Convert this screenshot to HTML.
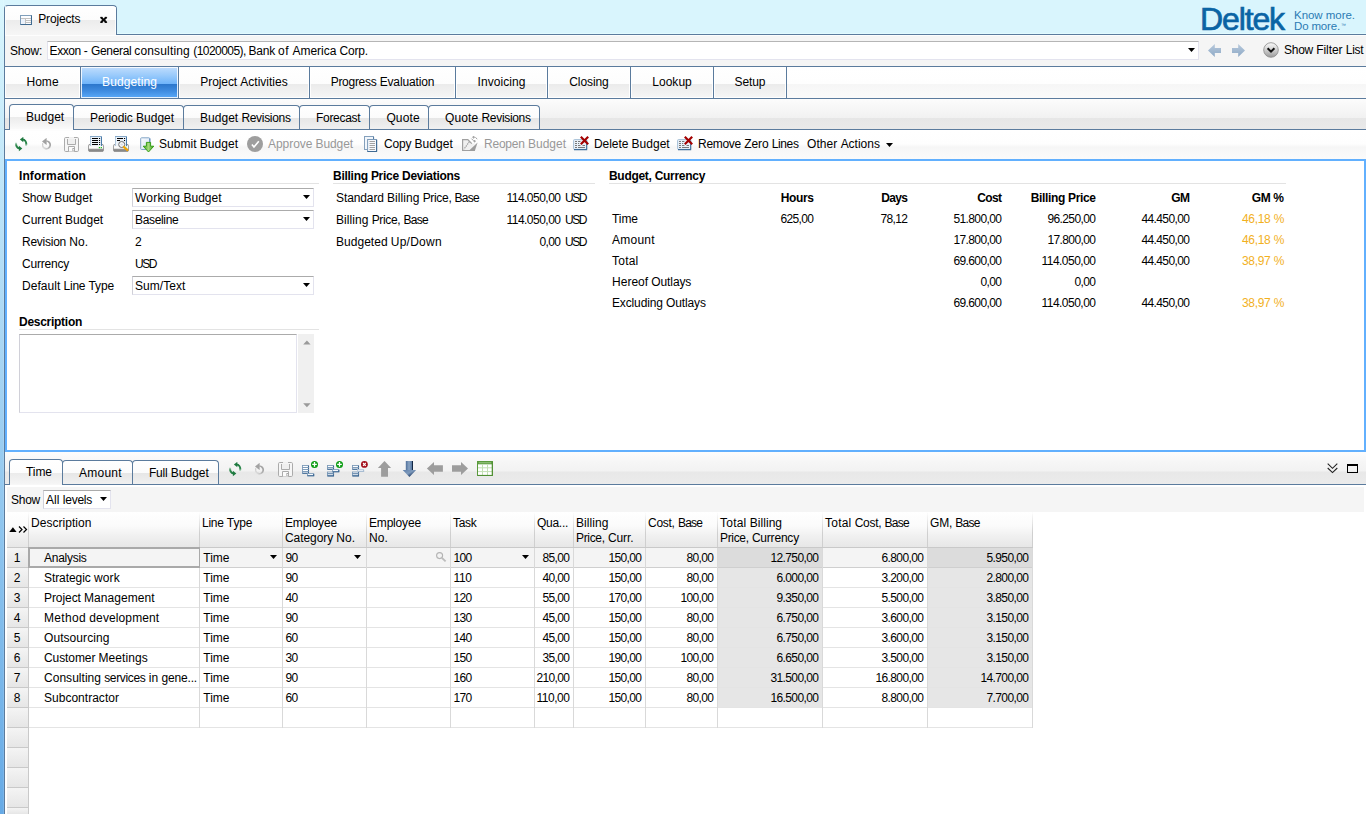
<!DOCTYPE html>
<html><head><meta charset="utf-8"><title>Projects</title>
<style>
html,body{margin:0;padding:0;background:#d9f5fd;}
#r{position:relative;width:1366px;height:814px;overflow:hidden;background:#d9f5fd;font-family:"Liberation Sans",sans-serif;font-size:12px;color:#000;}
#r>div,#r>svg,#r>span{position:absolute;display:block;}
.t{white-space:nowrap;line-height:14px;}
</style></head><body><div id="r">
<div style="left:0px;top:0px;width:4px;height:814px;background:linear-gradient(to bottom,#daf7fe 0px,#66aae6 814px)"></div>
<div style="left:3px;top:0px;width:1px;height:814px;background:rgba(255,255,255,.12)"></div>
<div style="left:4px;top:9px;width:1px;height:805px;background:#5b7b9d"></div>
<div style="left:116px;top:34px;width:1250px;height:1px;background:#5b7b9d"></div>
<div style="left:117px;top:33px;width:1249px;height:1px;background:#e2fbff"></div>
<div style="left:4px;top:5px;width:113px;height:30px;box-sizing:border-box;border:1px solid #5b7b9d;border-bottom:none;border-radius:4px 4px 0 0;background:linear-gradient(to bottom,#fff 0,#fcfcfc 14px,#ececec 14px,#f6f6f6 29px)"></div>
<div style="left:5px;top:6px;width:1px;height:29px;background:rgba(255,255,255,.8)"></div>
<div style="left:115px;top:7px;width:1px;height:27px;background:rgba(255,255,255,.8)"></div>
<svg style="left:20px;top:15px" width="12" height="10" viewBox="0 0 12 10"><rect x="0.5" y="0.5" width="11" height="9" fill="#fcfdff" stroke="#7f9eba"/><path d="M11.5 0.6V9.5H0.6" stroke="#3f6a90" stroke-width="1.1" fill="none"/><path d="M1 3.5H11M5.5 3.5V9M6 5.5H11M6 7.5H11" stroke="#c2c2c2"/><rect x="1.2" y="4.2" width="3.8" height="4.6" fill="#eaf1fb"/></svg>
<span class="t" style="top:12px;left:38.30px;letter-spacing:-0.176px;">Projects</span>
<svg style="left:100px;top:16px" width="8" height="8" viewBox="0 0 8 8"><path d="M1 1.5 L6.3 6.3 M6.3 1.5 L1 6.3" stroke="#080808" stroke-width="1.9" fill="none"/><path d="M0.2 1.4H2.6M4.7 1.4H7.1M0.2 6.4H2.6M4.7 6.4H7.1" stroke="#080808" stroke-width="1"/></svg>
<div style="left:5px;top:35px;width:1361px;height:31px;background:#f5f5f5"></div>
<div style="left:5px;top:35px;width:1361px;height:1px;background:#fdfdfd"></div>
<span class="t" style="top:44px;left:10.00px;letter-spacing:-0.284px;">Show:</span>
<div style="left:47px;top:41px;width:1152px;height:19px;box-sizing:border-box;background:#fff;border:1px solid #e3e3ee;border-top-color:#b5b5b5"></div>
<span class="t" style="top:44px;left:49.60px;letter-spacing:-0.470px;">Exxon</span>
<span class="t" style="top:44px;left:83.70px;letter-spacing:0.603px;">-</span>
<span class="t" style="top:44px;left:91.00px;letter-spacing:-0.342px;">General</span>
<span class="t" style="top:44px;left:134.30px;letter-spacing:0.157px;">consulting</span>
<span class="t" style="top:44px;left:193.20px;letter-spacing:-0.544px;">(1020005),</span>
<span class="t" style="top:44px;left:248.60px;letter-spacing:-0.238px;">Bank</span>
<span class="t" style="top:44px;left:278.00px;letter-spacing:0.646px;">of</span>
<span class="t" style="top:44px;left:292.40px;">America</span>
<span class="t" style="top:44px;left:339.40px;letter-spacing:-0.149px;">Corp.</span>
<svg style="left:1188px;top:48px" width="7" height="4" viewBox="0 0 7 4"><path d="M0 0H7L3.5 4Z" fill="#000"/></svg>
<svg style="left:1208px;top:44px" width="13" height="13" viewBox="0 0 13 13"><defs><linearGradient id="ga" x1="0" y1="0" x2="0" y2="1"><stop offset="0" stop-color="#b7c9dc"/><stop offset="1" stop-color="#8ea9c6"/></linearGradient></defs><path d="M0 6.5 L6.8 0 V4 H13 V9 H6.8 V13Z" fill="url(#ga)"/></svg>
<svg style="left:1232px;top:44px" width="13" height="13" viewBox="0 0 13 13"><path d="M13 6.5 L6.2 0 V4 H0 V9 H6.2 V13Z" fill="url(#ga)"/></svg>
<svg style="left:1263px;top:42px" width="16" height="16" viewBox="0 0 16 16"><defs><linearGradient id="gc" x1="0" y1="0" x2="0" y2="1"><stop offset="0" stop-color="#fafafa"/><stop offset="0.5" stop-color="#cfcfcf"/><stop offset="1" stop-color="#9a9a9a"/></linearGradient></defs><circle cx="8" cy="8" r="7.3" fill="url(#gc)" stroke="#8a8a8a" stroke-width="0.8"/><path d="M4.6 6.2 L8 9.6 L11.4 6.2" stroke="#111" stroke-width="2" fill="none"/></svg>
<span class="t" style="top:43px;left:1284.00px;letter-spacing:-0.259px;">Show</span>
<span class="t" style="top:43px;left:1316.19px;letter-spacing:-0.059px;">Filter</span>
<span class="t" style="top:43px;left:1345.70px;letter-spacing:-0.219px;">List</span>
<div style="left:5px;top:66px;width:1361px;height:1px;background:#5b7b9d"></div>
<div style="left:5px;top:67px;width:1361px;height:31px;background:linear-gradient(to bottom,#fff 0,#fefefe 17px,#f6f6f6 17px,#fafafa 31px)"></div>
<div style="left:5px;top:98px;width:1361px;height:1px;background:#5b7b9d"></div>
<div style="left:5px;top:67px;width:75px;height:31px;background:linear-gradient(to bottom,#fff 0,#fdfdfd 17px,#ebebeb 17px,#f6f6f6 31px);box-shadow:inset 0 0 0 1px rgba(255,255,255,.9)"></div>
<span class="t" style="top:75px;left:26.41px;letter-spacing:0.059px;">Home</span>
<div style="left:80px;top:67px;width:1px;height:31px;background:#5b7b9d"></div>
<div style="left:81px;top:67px;width:97px;height:31px;background:linear-gradient(to bottom,#c0ddfd 0,#9bcbfb 8px,#6eb4fa 17px,#2b76cb 17px,#3f8ce0 24px,#5aaaf9 31px);box-shadow:inset 0 0 0 1px rgba(255,255,255,.85)"></div>
<span class="t" style="top:75px;left:102.05px;letter-spacing:0.108px;color:#fff;">Budgeting</span>
<div style="left:178px;top:67px;width:1px;height:31px;background:#5b7b9d"></div>
<div style="left:179px;top:67px;width:130px;height:31px;background:linear-gradient(to bottom,#fff 0,#fdfdfd 17px,#ebebeb 17px,#f6f6f6 31px);box-shadow:inset 0 0 0 1px rgba(255,255,255,.9)"></div>
<span class="t" style="top:75px;left:200.29px;letter-spacing:-0.074px;">Project</span>
<span class="t" style="top:75px;left:240.32px;">Activities</span>
<div style="left:309px;top:67px;width:1px;height:31px;background:#5b7b9d"></div>
<div style="left:310px;top:67px;width:145px;height:31px;background:linear-gradient(to bottom,#fff 0,#fdfdfd 17px,#ebebeb 17px,#f6f6f6 31px);box-shadow:inset 0 0 0 1px rgba(255,255,255,.9)"></div>
<span class="t" style="top:75px;left:330.69px;letter-spacing:-0.283px;">Progress</span>
<span class="t" style="top:75px;left:379.65px;letter-spacing:-0.138px;">Evaluation</span>
<div style="left:455px;top:67px;width:1px;height:31px;background:#5b7b9d"></div>
<div style="left:456px;top:67px;width:91px;height:31px;background:linear-gradient(to bottom,#fff 0,#fdfdfd 17px,#ebebeb 17px,#f6f6f6 31px);box-shadow:inset 0 0 0 1px rgba(255,255,255,.9)"></div>
<span class="t" style="top:75px;left:477.50px;letter-spacing:0.081px;">Invoicing</span>
<div style="left:547px;top:67px;width:1px;height:31px;background:#5b7b9d"></div>
<div style="left:548px;top:67px;width:82px;height:31px;background:linear-gradient(to bottom,#fff 0,#fdfdfd 17px,#ebebeb 17px,#f6f6f6 31px);box-shadow:inset 0 0 0 1px rgba(255,255,255,.9)"></div>
<span class="t" style="top:75px;left:569.29px;letter-spacing:-0.100px;">Closing</span>
<div style="left:630px;top:67px;width:1px;height:31px;background:#5b7b9d"></div>
<div style="left:631px;top:67px;width:82px;height:31px;background:linear-gradient(to bottom,#fff 0,#fdfdfd 17px,#ebebeb 17px,#f6f6f6 31px);box-shadow:inset 0 0 0 1px rgba(255,255,255,.9)"></div>
<span class="t" style="top:75px;left:652.21px;letter-spacing:0.044px;">Lookup</span>
<div style="left:713px;top:67px;width:1px;height:31px;background:#5b7b9d"></div>
<div style="left:714px;top:67px;width:72px;height:31px;background:linear-gradient(to bottom,#fff 0,#fdfdfd 17px,#ebebeb 17px,#f6f6f6 31px);box-shadow:inset 0 0 0 1px rgba(255,255,255,.9)"></div>
<span class="t" style="top:75px;left:734.61px;letter-spacing:-0.145px;">Setup</span>
<div style="left:786px;top:67px;width:1px;height:31px;background:#5b7b9d"></div>
<div style="left:5px;top:99px;width:1361px;height:30px;background:linear-gradient(to bottom,#fcfcfc 0,#f1f1f1 19px,#e6e6e6 19px,#e9e9e9 30px)"></div>
<div style="left:5px;top:129px;width:1361px;height:1px;background:#5b7b9d"></div>
<div style="left:73px;top:105px;width:111px;height:24px;box-sizing:border-box;border:1px solid #5b7b9d;border-bottom:none;border-radius:4px 4px 0 0;background:linear-gradient(to bottom,#fff 0,#fbfbfb 12px,#e6e6e6 12px,#f1f1f1 24px)"></div>
<span class="t" style="top:111px;left:90.00px;letter-spacing:-0.076px;">Periodic</span>
<span class="t" style="top:111px;left:135.94px;letter-spacing:0.032px;">Budget</span>
<div style="left:183px;top:105px;width:117px;height:24px;box-sizing:border-box;border:1px solid #5b7b9d;border-bottom:none;border-radius:4px 4px 0 0;background:linear-gradient(to bottom,#fff 0,#fbfbfb 12px,#e6e6e6 12px,#f1f1f1 24px)"></div>
<span class="t" style="top:111px;left:200.00px;letter-spacing:0.032px;">Budget</span>
<span class="t" style="top:111px;left:241.42px;letter-spacing:-0.318px;">Revisions</span>
<div style="left:299px;top:105px;width:71px;height:24px;box-sizing:border-box;border:1px solid #5b7b9d;border-bottom:none;border-radius:4px 4px 0 0;background:linear-gradient(to bottom,#fff 0,#fbfbfb 12px,#e6e6e6 12px,#f1f1f1 24px)"></div>
<span class="t" style="top:111px;left:316.00px;letter-spacing:-0.301px;">Forecast</span>
<div style="left:369px;top:105px;width:60px;height:24px;box-sizing:border-box;border:1px solid #5b7b9d;border-bottom:none;border-radius:4px 4px 0 0;background:linear-gradient(to bottom,#fff 0,#fbfbfb 12px,#e6e6e6 12px,#f1f1f1 24px)"></div>
<span class="t" style="top:111px;left:386.40px;letter-spacing:0.122px;">Quote</span>
<div style="left:428px;top:105px;width:112px;height:24px;box-sizing:border-box;border:1px solid #5b7b9d;border-bottom:none;border-radius:4px 4px 0 0;background:linear-gradient(to bottom,#fff 0,#fbfbfb 12px,#e6e6e6 12px,#f1f1f1 24px)"></div>
<span class="t" style="top:111px;left:445.00px;letter-spacing:0.122px;">Quote</span>
<span class="t" style="top:111px;left:481.50px;letter-spacing:-0.318px;">Revisions</span>
<div style="left:9px;top:104px;width:65px;height:26px;box-sizing:border-box;border:1px solid #5b7b9d;border-bottom:none;border-radius:4px 4px 0 0;background:linear-gradient(to bottom,#fff 0,#fdfdfd 12px,#ebebeb 12px,#fbfbfb 25px)"></div>
<span class="t" style="top:110px;left:26.00px;letter-spacing:0.032px;">Budget</span>
<div style="left:5px;top:130px;width:1361px;height:29px;background:linear-gradient(to bottom,#fff 0,#fefefe 14px,#f6f6f6 17px,#fbfbfb 29px)"></div>
<div style="left:10px;top:129px;width:63px;height:2px;background:#fdfdfd"></div>
<svg style="left:15px;top:137px" width="14" height="15" viewBox="0 0 14 15"><defs><linearGradient id="g1" gradientUnits="userSpaceOnUse" x1="0" y1="3" x2="0" y2="9.3"><stop offset="0" stop-color="#1f7a40"/><stop offset="0.55" stop-color="#2f8a4e"/><stop offset="1" stop-color="#2f8a4e" stop-opacity="0.05"/></linearGradient><linearGradient id="g2" gradientUnits="userSpaceOnUse" x1="0" y1="12" x2="0" y2="5.2"><stop offset="0" stop-color="#1f7a40"/><stop offset="0.55" stop-color="#2f8a4e"/><stop offset="1" stop-color="#2f8a4e" stop-opacity="0.05"/></linearGradient></defs><path d="M7.6 2.6 C9.9 2.8 11.3 4.9 11.3 7 C11.3 7.8 11.1 8.4 10.8 9" stroke="url(#g1)" stroke-width="2" fill="none"/><path d="M8.3 -0.2 L4.9 2.5 L8.3 5.2Z" fill="#1f7a40"/><path d="M1.2 5.4 C0.6 8.4 2 11.2 4.6 11.5" stroke="url(#g2)" stroke-width="2" fill="none"/><path d="M3.9 8.8 L7.3 11.5 L3.9 14.2Z" fill="#1f7a40"/></svg>
<svg style="left:42px;top:138px" width="11" height="13" viewBox="0 0 11 13"><defs><linearGradient id="g3" gradientUnits="userSpaceOnUse" x1="8.5" y1="3" x2="0.5" y2="10"><stop offset="0" stop-color="#9b9b9b"/><stop offset="0.5" stop-color="#b2b2b2"/><stop offset="1" stop-color="#e3e3e3"/></linearGradient></defs><path d="M4.3 3 A3.9 3.9 0 1 1 0.7 5.4" stroke="url(#g3)" stroke-width="1.7" fill="none"/><path d="M4.6 -0.2 L0 3.4 L4.6 6.9Z" fill="#a2a2a2"/></svg>
<svg style="left:64px;top:137px" width="15" height="15" viewBox="0 0 15 15"><rect x="0.5" y="0.5" width="14" height="14" rx="1.2" fill="#f6f6f6" stroke="#ababab"/><rect x="5" y="0" width="5" height="1.2" fill="#f0f0f0"/><path d="M3.5 2 V7.5 H11.5 V2" fill="#efefef" stroke="#ababab"/><path d="M4.5 14.5 V9.5 H10.5 V14.5" fill="#fbfbfb" stroke="#ababab"/><rect x="8.4" y="11" width="2.1" height="3" fill="#a6a6a6"/><rect x="9" y="12" width="0.9" height="1.6" fill="#f4f4f4"/></svg>
<svg style="left:88px;top:136px" width="16" height="16" viewBox="0 0 16 16"><defs><linearGradient id="g4" x1="0" y1="0" x2="0" y2="1"><stop offset="0" stop-color="#cfcfcf"/><stop offset="0.25" stop-color="#f4f4f4"/><stop offset="0.42" stop-color="#ffffff"/><stop offset="0.58" stop-color="#dedede"/><stop offset="0.72" stop-color="#8d8d8d"/><stop offset="0.8" stop-color="#5e5e5e"/><stop offset="0.9" stop-color="#b4b4b4"/><stop offset="1" stop-color="#757575"/></linearGradient><linearGradient id="g5" x1="0" y1="0" x2="1" y2="0"><stop offset="0" stop-color="#8fb0cf"/><stop offset="0.12" stop-color="#eef4fa"/><stop offset="0.88" stop-color="#e6eef7"/><stop offset="0.93" stop-color="#4d80b0"/><stop offset="1" stop-color="#44739f"/></linearGradient></defs><rect x="0.5" y="8.3" width="15" height="7.3" rx="1.6" fill="url(#g4)" stroke="#8a8a8a" stroke-width="0.8"/><rect x="2" y="0" width="12" height="10" fill="url(#g5)"/><rect x="2" y="0" width="12" height="1" fill="#86a8c8"/><path d="M4 2.5H10M4 4.5H10M4 6.5H10M4 8.5H10" stroke="#000" stroke-width="1.1"/><path d="M11 2.5H12.1M11 4.5H12.1M11 6.5H12.1M11 8.5H12.1" stroke="#000" stroke-width="1.1"/><rect x="0.2" y="10" width="15.6" height="1.6" fill="#f6f6f6" fill-opacity=".0"/><rect x="10.8" y="11" width="1.2" height="1.2" fill="#18c018"/><rect x="12.7" y="11" width="1.2" height="1.2" fill="#18c018"/></svg>
<svg style="left:113px;top:136px" width="16" height="16" viewBox="0 0 16 16"><defs><linearGradient id="g6" x1="0" y1="0" x2="0" y2="1"><stop offset="0" stop-color="#cfcfcf"/><stop offset="0.25" stop-color="#f4f4f4"/><stop offset="0.42" stop-color="#ffffff"/><stop offset="0.58" stop-color="#dedede"/><stop offset="0.72" stop-color="#8d8d8d"/><stop offset="0.8" stop-color="#5e5e5e"/><stop offset="0.9" stop-color="#b4b4b4"/><stop offset="1" stop-color="#757575"/></linearGradient><linearGradient id="g7" x1="0" y1="0" x2="1" y2="0"><stop offset="0" stop-color="#8fb0cf"/><stop offset="0.12" stop-color="#eef4fa"/><stop offset="0.88" stop-color="#e6eef7"/><stop offset="0.93" stop-color="#4d80b0"/><stop offset="1" stop-color="#44739f"/></linearGradient></defs><rect x="0.5" y="8.3" width="15" height="7.3" rx="1.6" fill="url(#g6)" stroke="#8a8a8a" stroke-width="0.8"/><rect x="2" y="0" width="12" height="10" fill="url(#g7)"/><rect x="2" y="0" width="12" height="1" fill="#86a8c8"/><path d="M4 2.5H10M4 4.5H7" stroke="#000" stroke-width="1.1"/><path d="M11 2.5H12.1M11 4.5H12.1" stroke="#000" stroke-width="1.1"/><rect x="0.2" y="10" width="15.6" height="1.6" fill="#f6f6f6" fill-opacity=".0"/><circle cx="8.7" cy="8.5" r="3" fill="#f7f9fb" stroke="#6f6f6f" stroke-width="1"/><ellipse cx="8.7" cy="8.5" rx="1.3" ry="0.9" fill="#d9dde2"/><path d="M11 11 L14.3 14" stroke="#f5a400" stroke-width="2.3" stroke-linecap="round"/><rect x="12.6" y="10.6" width="1" height="1" fill="#5fd48a"/></svg>
<svg style="left:140px;top:137px" width="14" height="16" viewBox="0 0 14 16"><defs><linearGradient id="g8" x1="0" y1="0" x2="1" y2="1"><stop offset="0" stop-color="#fafcff"/><stop offset="1" stop-color="#d3e3f5"/></linearGradient><linearGradient id="g9" x1="0" y1="0" x2="1" y2="0"><stop offset="0" stop-color="#3aa514"/><stop offset="0.5" stop-color="#a5d97e"/><stop offset="1" stop-color="#2f9a0e"/></linearGradient></defs><rect x="0.7" y="0.8" width="9" height="11.7" rx="0.8" fill="url(#g8)" stroke="#84a5c7"/><path d="M9.9 1.5V12.6" stroke="#4b7cb0" stroke-width="0.9"/><path d="M6.4 5.4 H10.6 V9.2 H13.8 L8.5 15 L3.2 9.2 H6.4Z" fill="url(#g9)" stroke="#2c9a0c" stroke-width="0.9"/></svg>
<span class="t" style="top:137px;left:159.00px;letter-spacing:0.044px;">Submit</span>
<span class="t" style="top:137px;left:199.81px;letter-spacing:0.032px;">Budget</span>
<svg style="left:247px;top:136px" width="16" height="16" viewBox="0 0 16 16"><circle cx="8" cy="8" r="8" fill="#9e9e9e"/><path d="M4.9 8.4 L7 10.9 L11.8 5.3" stroke="#fff" stroke-width="1.6" fill="none"/></svg>
<span class="t" style="top:137px;left:268.00px;letter-spacing:-0.048px;color:#989898;">Approve</span>
<span class="t" style="top:137px;left:315.50px;letter-spacing:-0.089px;color:#989898;">Budget</span>
<svg style="left:364px;top:136px" width="14" height="16" viewBox="0 0 14 16"><rect x="0.5" y="0.5" width="9" height="13" fill="#f2f6fb" stroke="#84a0bc"/><path d="M9.6 1V13.6" stroke="#51789f"/><rect x="3.6" y="3.5" width="9" height="12" fill="#f6f9fd" stroke="#7c9ab8"/><path d="M12.6 4V15.6M3.5 15.6H13" stroke="#3f6a94" stroke-width="1.1" fill="none"/><path d="M5.5 5.5H11M5.5 7.5H11M5.5 9.5H11M5.5 11.5H11M5.5 13.5H11" stroke="#a2a2a2"/></svg>
<span class="t" style="top:137px;left:384.00px;letter-spacing:-0.161px;">Copy</span>
<span class="t" style="top:137px;left:414.57px;letter-spacing:0.032px;">Budget</span>
<svg style="left:462px;top:136px" width="16" height="16" viewBox="0 0 16 16"><path d="M0.6 3.6 H5.8 L9.8 7.6 L13.5 7.6 L7 14.5 H0.6Z" fill="#f0f0f0"/><path d="M9.8 7.7 L5.8 3.6 H0.6 V14.5 H12.6" fill="none" stroke="#a0a0a0" stroke-width="1.2"/><path d="M6.6 14.9 L15.6 6.6 L12.8 14.9Z" fill="#9c9c9c"/><path d="M7.4 5.6 L1.8 13.4" stroke="#a3a3a3" stroke-width="1.2" stroke-dasharray="1.5 0.8"/><path d="M11.6 -0.2 V2.6 M10.2 1.2 H13 M9.4 2.6 L11.6 4.8 M13.4 1.2 L15.2 3.2 M12.6 4 V6.4 M11.4 5.2 H13.8" stroke="#a2a2a2" stroke-width="1"/></svg>
<span class="t" style="top:137px;left:484.00px;letter-spacing:-0.220px;color:#989898;">Reopen</span>
<span class="t" style="top:137px;left:527.92px;letter-spacing:0.032px;color:#989898;">Budget</span>
<svg style="left:573px;top:136px" width="17" height="15" viewBox="0 0 17 15"><rect x="0.6" y="3.6" width="13" height="9.8" rx="0.8" fill="#e9f1f9" stroke="#a6bfd7"/><path d="M13.7 4.5V13.6M1 13.6H14.2" stroke="#3f6d98" stroke-width="1.1" fill="none"/><path d="M2 5.5H4M5 5.5H7.4M2 7.5H4M5 7.5H6.2M2 9.5H4M5 9.5H7.4M9.5 9.5H12M2 11.5H4M5 11.5H12" stroke="#6b6b6b" stroke-width="0.9"/><path d="M7.8 0.8 L15.2 8.2 M15.2 0.8 L7.8 8.2" stroke="#a30000" stroke-width="2.2"/></svg>
<span class="t" style="top:137px;left:594.00px;letter-spacing:-0.062px;">Delete</span>
<span class="t" style="top:137px;left:631.52px;letter-spacing:0.032px;">Budget</span>
<svg style="left:677px;top:136px" width="17" height="15" viewBox="0 0 17 15"><rect x="0.6" y="3.6" width="13" height="9.8" rx="0.8" fill="#e9f1f9" stroke="#a6bfd7"/><path d="M13.7 4.5V13.6M1 13.6H14.2" stroke="#3f6d98" stroke-width="1.1" fill="none"/><path d="M2 5.5H4M5 5.5H7.4M2 7.5H4M5 7.5H6.2M2 9.5H4M5 9.5H7.4M9.5 9.5H12M2 11.5H4M5 11.5H12" stroke="#6b6b6b" stroke-width="0.9"/><path d="M7.8 0.8 L15.2 8.2 M15.2 0.8 L7.8 8.2" stroke="#a30000" stroke-width="2.2"/></svg>
<span class="t" style="top:137px;left:698.00px;letter-spacing:-0.287px;">Remove</span>
<span class="t" style="top:137px;left:744.16px;letter-spacing:-0.068px;">Zero</span>
<span class="t" style="top:137px;left:771.76px;letter-spacing:-0.381px;">Lines</span>
<span class="t" style="top:137px;left:807.00px;letter-spacing:0.085px;">Other</span>
<span class="t" style="top:137px;left:840.64px;letter-spacing:-0.011px;">Actions</span>
<svg style="left:886px;top:143px" width="7" height="4" viewBox="0 0 7 4"><path d="M0 0H7L3.5 4Z" fill="#000"/></svg>
<div style="left:5px;top:159px;width:1361px;height:293px;box-sizing:border-box;border:2px solid #62b0fe;background:#fff"></div>
<span class="t" style="top:169px;left:19.00px;letter-spacing:0.091px;font-weight:bold;">Information</span>
<div style="left:19px;top:183px;width:300px;height:1px;background:#e3e3e3"></div>
<span class="t" style="top:191px;left:22.00px;letter-spacing:-0.271px;">Show</span>
<span class="t" style="top:191px;left:54.13px;letter-spacing:0.032px;">Budget</span>
<span class="t" style="top:213px;left:22.00px;letter-spacing:-0.030px;">Current</span>
<span class="t" style="top:213px;left:65.00px;letter-spacing:0.032px;">Budget</span>
<span class="t" style="top:235px;left:22.00px;letter-spacing:-0.246px;">Revision</span>
<span class="t" style="top:235px;left:69.25px;letter-spacing:0.127px;">No.</span>
<span class="t" style="top:257px;left:22.00px;letter-spacing:-0.201px;">Currency</span>
<span class="t" style="top:279px;left:22.00px;letter-spacing:0.057px;">Default</span>
<span class="t" style="top:279px;left:63.62px;letter-spacing:-0.253px;">Line</span>
<span class="t" style="top:279px;left:88.49px;letter-spacing:-0.137px;">Type</span>
<div style="left:132px;top:188px;width:182px;height:19px;box-sizing:border-box;background:#fff;border:1px solid #e3e3ee;border-top-color:#ababab;border-left-color:#d0d0d8"></div>
<span class="t" style="top:191px;left:135.00px;letter-spacing:0.204px;">Working</span>
<span class="t" style="top:191px;left:183.42px;letter-spacing:0.032px;">Budget</span>
<svg style="left:303px;top:195px" width="7" height="4" viewBox="0 0 7 4"><path d="M0 0H7L3.5 4Z" fill="#000"/></svg>
<div style="left:132px;top:210px;width:182px;height:19px;box-sizing:border-box;background:#fff;border:1px solid #e3e3ee;border-top-color:#ababab;border-left-color:#d0d0d8"></div>
<span class="t" style="top:213px;left:135.00px;letter-spacing:-0.335px;">Baseline</span>
<svg style="left:303px;top:217px" width="7" height="4" viewBox="0 0 7 4"><path d="M0 0H7L3.5 4Z" fill="#000"/></svg>
<span class="t" style="top:235px;left:135.00px;letter-spacing:-0.673px;">2</span>
<span class="t" style="top:257px;left:135.00px;letter-spacing:-1.445px;">USD</span>
<div style="left:132px;top:276px;width:182px;height:19px;box-sizing:border-box;background:#fff;border:1px solid #e3e3ee;border-top-color:#ababab;border-left-color:#d0d0d8"></div>
<span class="t" style="top:279px;left:135.00px;letter-spacing:0.054px;">Sum/Text</span>
<svg style="left:303px;top:283px" width="7" height="4" viewBox="0 0 7 4"><path d="M0 0H7L3.5 4Z" fill="#000"/></svg>
<span class="t" style="top:315px;left:19.00px;letter-spacing:-0.274px;font-weight:bold;">Description</span>
<div style="left:19px;top:329px;width:300px;height:1px;background:#e3e3e3"></div>
<div style="left:19px;top:334px;width:278px;height:79px;box-sizing:border-box;background:#fff;border:1px solid #e3e3ee;border-top-color:#ababab;border-left-color:#d0d0d8"></div>
<div style="left:298px;top:334px;width:16px;height:79px;background:#f0f0f0"></div>
<svg style="left:302.6px;top:340px" width="8" height="5" viewBox="0 0 8 5"><path d="M0.2 4.6 L3.9 0.6 L7.6 4.6Z" fill="#9a9a9a"/></svg>
<svg style="left:302.6px;top:403px" width="8" height="5" viewBox="0 0 8 5"><path d="M0.2 0.2 L3.9 4.2 L7.6 0.2Z" fill="#9a9a9a"/></svg>
<span class="t" style="top:169px;left:333.00px;letter-spacing:-0.265px;font-weight:bold;">Billing Price Deviations</span>
<div style="left:333px;top:183px;width:262px;height:1px;background:#e3e3e3"></div>
<span class="t" style="top:191px;left:336.00px;letter-spacing:-0.106px;">Standard</span>
<span class="t" style="top:191px;left:387.06px;letter-spacing:0.060px;">Billing</span>
<span class="t" style="top:191px;left:422.69px;letter-spacing:-0.329px;">Price,</span>
<span class="t" style="top:191px;left:454.59px;letter-spacing:-0.732px;">Base</span>
<span class="t" style="top:191px;left:506.48px;letter-spacing:-0.517px;">114.050,00</span>
<span class="t" style="top:191px;left:565.00px;letter-spacing:-1.445px;">USD</span>
<span class="t" style="top:213px;left:336.00px;letter-spacing:0.060px;">Billing</span>
<span class="t" style="top:213px;left:371.63px;letter-spacing:-0.329px;">Price,</span>
<span class="t" style="top:213px;left:403.53px;letter-spacing:-0.732px;">Base</span>
<span class="t" style="top:213px;left:506.48px;letter-spacing:-0.517px;">114.050,00</span>
<span class="t" style="top:213px;left:565.00px;letter-spacing:-1.445px;">USD</span>
<span class="t" style="top:235px;left:336.00px;letter-spacing:0.027px;">Budgeted</span>
<span class="t" style="top:235px;left:390.79px;letter-spacing:0.239px;">Up/Down</span>
<span class="t" style="top:235px;left:539.41px;letter-spacing:-0.589px;">0,00</span>
<span class="t" style="top:235px;left:565.00px;letter-spacing:-1.445px;">USD</span>
<span class="t" style="top:169px;left:609.00px;letter-spacing:-0.292px;font-weight:bold;">Budget, Currency</span>
<div style="left:609px;top:183px;width:677px;height:1px;background:#e3e3e3"></div>
<span class="t" style="top:191px;left:780.67px;letter-spacing:-0.334px;font-weight:bold;">Hours</span>
<span class="t" style="top:191px;left:881.33px;letter-spacing:-0.671px;font-weight:bold;">Days</span>
<span class="t" style="top:191px;left:977.33px;letter-spacing:-0.666px;font-weight:bold;">Cost</span>
<span class="t" style="top:191px;left:1030.67px;letter-spacing:-0.335px;font-weight:bold;">Billing Price</span>
<span class="t" style="top:191px;left:1171.33px;letter-spacing:-0.666px;font-weight:bold;">GM</span>
<span class="t" style="top:191px;left:1251.67px;letter-spacing:-0.334px;font-weight:bold;">GM %</span>
<span class="t" style="top:212px;left:612.00px;letter-spacing:-0.087px;">Time</span>
<span class="t" style="top:212px;left:780.38px;letter-spacing:-0.617px;">625,00</span>
<span class="t" style="top:212px;left:880.39px;letter-spacing:-0.606px;">78,12</span>
<span class="t" style="top:212px;left:953.40px;letter-spacing:-0.598px;">51.800,00</span>
<span class="t" style="top:212px;left:1047.40px;letter-spacing:-0.598px;">96.250,00</span>
<span class="t" style="top:212px;left:1141.40px;letter-spacing:-0.598px;">44.450,00</span>
<span class="t" style="top:212px;left:1242.00px;letter-spacing:-0.336px;color:#f2b01e;">46,18</span>
<span class="t" style="top:212px;left:1273.71px;letter-spacing:-0.380px;color:#f2b01e;">%</span>
<span class="t" style="top:233px;left:612.00px;letter-spacing:0.249px;">Amount</span>
<span class="t" style="top:233px;left:953.40px;letter-spacing:-0.598px;">17.800,00</span>
<span class="t" style="top:233px;left:1047.40px;letter-spacing:-0.598px;">17.800,00</span>
<span class="t" style="top:233px;left:1141.40px;letter-spacing:-0.598px;">44.450,00</span>
<span class="t" style="top:233px;left:1242.00px;letter-spacing:-0.336px;color:#f2b01e;">46,18</span>
<span class="t" style="top:233px;left:1273.71px;letter-spacing:-0.380px;color:#f2b01e;">%</span>
<span class="t" style="top:254px;left:612.00px;letter-spacing:0.226px;">Total</span>
<span class="t" style="top:254px;left:953.40px;letter-spacing:-0.598px;">69.600,00</span>
<span class="t" style="top:254px;left:1041.48px;letter-spacing:-0.517px;">114.050,00</span>
<span class="t" style="top:254px;left:1141.40px;letter-spacing:-0.598px;">44.450,00</span>
<span class="t" style="top:254px;left:1242.00px;letter-spacing:-0.336px;color:#f2b01e;">38,97</span>
<span class="t" style="top:254px;left:1273.71px;letter-spacing:-0.380px;color:#f2b01e;">%</span>
<span class="t" style="top:275px;left:612.00px;letter-spacing:0.021px;">Hereof</span>
<span class="t" style="top:275px;left:651.34px;letter-spacing:-0.113px;">Outlays</span>
<span class="t" style="top:275px;left:980.41px;letter-spacing:-0.589px;">0,00</span>
<span class="t" style="top:275px;left:1074.41px;letter-spacing:-0.589px;">0,00</span>
<span class="t" style="top:296px;left:612.00px;letter-spacing:-0.142px;">Excluding</span>
<span class="t" style="top:296px;left:665.95px;letter-spacing:-0.113px;">Outlays</span>
<span class="t" style="top:296px;left:953.40px;letter-spacing:-0.598px;">69.600,00</span>
<span class="t" style="top:296px;left:1041.48px;letter-spacing:-0.517px;">114.050,00</span>
<span class="t" style="top:296px;left:1141.40px;letter-spacing:-0.598px;">44.450,00</span>
<span class="t" style="top:296px;left:1242.00px;letter-spacing:-0.336px;color:#f2b01e;">38,97</span>
<span class="t" style="top:296px;left:1273.71px;letter-spacing:-0.380px;color:#f2b01e;">%</span>
<div style="left:5px;top:452px;width:1361px;height:32px;background:linear-gradient(to bottom,#fdfdfd 0,#f6f6f6 10px,#f2f2f2 19px,#e8e8e8 20px,#ebebeb 32px)"></div>
<div style="left:5px;top:484px;width:1361px;height:1px;background:#5b7b9d"></div>
<div style="left:62px;top:460px;width:71px;height:24px;box-sizing:border-box;border:1px solid #5b7b9d;border-bottom:none;border-radius:4px 4px 0 0;background:linear-gradient(to bottom,#fff 0,#fbfbfb 12px,#e6e6e6 12px,#f1f1f1 24px)"></div>
<span class="t" style="top:466px;left:79.00px;letter-spacing:0.249px;">Amount</span>
<div style="left:132px;top:460px;width:87px;height:24px;box-sizing:border-box;border:1px solid #5b7b9d;border-bottom:none;border-radius:4px 4px 0 0;background:linear-gradient(to bottom,#fff 0,#fbfbfb 12px,#e6e6e6 12px,#f1f1f1 24px)"></div>
<span class="t" style="top:466px;left:149.00px;letter-spacing:-0.208px;">Full</span>
<span class="t" style="top:466px;left:170.70px;letter-spacing:0.032px;">Budget</span>
<div style="left:9px;top:459px;width:54px;height:26px;box-sizing:border-box;border:1px solid #5b7b9d;border-bottom:none;border-radius:4px 4px 0 0;background:linear-gradient(to bottom,#fff 0,#fdfdfd 13px,#ebebeb 13px,#f6f6f6 25px)"></div>
<div style="left:10px;top:484px;width:52px;height:1px;background:#f7f7f7"></div>
<span class="t" style="top:465px;left:26.00px;letter-spacing:-0.087px;">Time</span>
<svg style="left:229px;top:462px" width="14" height="15" viewBox="0 0 14 15"><defs><linearGradient id="g10" gradientUnits="userSpaceOnUse" x1="0" y1="3" x2="0" y2="9.3"><stop offset="0" stop-color="#1f7a40"/><stop offset="0.55" stop-color="#2f8a4e"/><stop offset="1" stop-color="#2f8a4e" stop-opacity="0.05"/></linearGradient><linearGradient id="g11" gradientUnits="userSpaceOnUse" x1="0" y1="12" x2="0" y2="5.2"><stop offset="0" stop-color="#1f7a40"/><stop offset="0.55" stop-color="#2f8a4e"/><stop offset="1" stop-color="#2f8a4e" stop-opacity="0.05"/></linearGradient></defs><path d="M7.6 2.6 C9.9 2.8 11.3 4.9 11.3 7 C11.3 7.8 11.1 8.4 10.8 9" stroke="url(#g10)" stroke-width="2" fill="none"/><path d="M8.3 -0.2 L4.9 2.5 L8.3 5.2Z" fill="#1f7a40"/><path d="M1.2 5.4 C0.6 8.4 2 11.2 4.6 11.5" stroke="url(#g11)" stroke-width="2" fill="none"/><path d="M3.9 8.8 L7.3 11.5 L3.9 14.2Z" fill="#1f7a40"/></svg>
<svg style="left:255px;top:463px" width="11" height="13" viewBox="0 0 11 13"><defs><linearGradient id="g12" gradientUnits="userSpaceOnUse" x1="8.5" y1="3" x2="0.5" y2="10"><stop offset="0" stop-color="#9b9b9b"/><stop offset="0.5" stop-color="#b2b2b2"/><stop offset="1" stop-color="#e3e3e3"/></linearGradient></defs><path d="M4.3 3 A3.9 3.9 0 1 1 0.7 5.4" stroke="url(#g12)" stroke-width="1.7" fill="none"/><path d="M4.6 -0.2 L0 3.4 L4.6 6.9Z" fill="#a2a2a2"/></svg>
<svg style="left:278px;top:462px" width="15" height="15" viewBox="0 0 15 15"><rect x="0.5" y="0.5" width="14" height="14" rx="1.2" fill="#f6f6f6" stroke="#ababab"/><rect x="5" y="0" width="5" height="1.2" fill="#f0f0f0"/><path d="M3.5 2 V7.5 H11.5 V2" fill="#efefef" stroke="#ababab"/><path d="M4.5 14.5 V9.5 H10.5 V14.5" fill="#fbfbfb" stroke="#ababab"/><rect x="8.4" y="11" width="2.1" height="3" fill="#a6a6a6"/><rect x="9" y="12" width="0.9" height="1.6" fill="#f4f4f4"/></svg>
<svg style="left:302px;top:460px" width="17" height="17" viewBox="0 0 17 17"><rect x="0.5" y="5.5" width="6" height="2" fill="#fdfeff" stroke="#7d9bb9" stroke-width="0.9"/><path d="M0.5 7.5H6.5V5.8" stroke="#3c6792" stroke-width="1.1" fill="none"/><rect x="0.5" y="7.5" width="6" height="2" fill="#fdfeff" stroke="#7d9bb9" stroke-width="0.9"/><path d="M0.5 9.5H6.5V7.8" stroke="#3c6792" stroke-width="1.1" fill="none"/><rect x="0.5" y="9.5" width="6" height="2" fill="#fdfeff" stroke="#7d9bb9" stroke-width="0.9"/><path d="M0.5 11.5H6.5V9.8" stroke="#3c6792" stroke-width="1.1" fill="none"/><rect x="0.5" y="11.5" width="6" height="1.8" fill="#fdfeff" stroke="#7d9bb9" stroke-width="0.9"/><path d="M0.5 13.3H6.5V11.8" stroke="#3c6792" stroke-width="1.1" fill="none"/><rect x="5.5" y="13.6" width="6.2" height="2.2" fill="#fdfeff" stroke="#7d9bb9" stroke-width="0.9"/><path d="M5.5 15.8H11.7V13.9" stroke="#3c6792" stroke-width="1.1" fill="none"/><circle cx="12.5" cy="4.4" r="3.5" fill="#0b9c12"/><path d="M12.5 2.1000000000000005V6.7M10.2 4.4H14.8" stroke="#fff" stroke-width="1.3"/></svg>
<svg style="left:327px;top:460px" width="17" height="17" viewBox="0 0 17 17"><rect x="0.5" y="5.5" width="6" height="2" fill="#fdfeff" stroke="#7d9bb9" stroke-width="0.9"/><path d="M0.5 7.5H6.5V5.8" stroke="#3c6792" stroke-width="1.1" fill="none"/><rect x="0.5" y="7.5" width="6" height="1.8" fill="#fdfeff" stroke="#7d9bb9" stroke-width="0.9"/><path d="M0.5 9.3H6.5V7.8" stroke="#3c6792" stroke-width="1.1" fill="none"/><rect x="0.5" y="12" width="6" height="1.9" fill="#fdfeff" stroke="#7d9bb9" stroke-width="0.9"/><path d="M0.5 13.9H6.5V12.3" stroke="#3c6792" stroke-width="1.1" fill="none"/><rect x="0.5" y="13.9" width="6" height="2" fill="#fdfeff" stroke="#7d9bb9" stroke-width="0.9"/><path d="M0.5 15.9H6.5V14.200000000000001" stroke="#3c6792" stroke-width="1.1" fill="none"/><rect x="5.6" y="9.6" width="6.2" height="2.2" fill="#fdfeff" stroke="#7d9bb9" stroke-width="0.9"/><path d="M5.6 11.8H11.8V9.9" stroke="#3c6792" stroke-width="1.1" fill="none"/><circle cx="12.5" cy="4.4" r="3.5" fill="#0b9c12"/><path d="M12.5 2.1000000000000005V6.7M10.2 4.4H14.8" stroke="#fff" stroke-width="1.3"/></svg>
<svg style="left:352px;top:460px" width="17" height="17" viewBox="0 0 17 17"><rect x="0.5" y="5.5" width="6" height="2" fill="#fdfeff" stroke="#7d9bb9" stroke-width="0.9"/><path d="M0.5 7.5H6.5V5.8" stroke="#3c6792" stroke-width="1.1" fill="none"/><rect x="0.5" y="7.5" width="6" height="1.8" fill="#fdfeff" stroke="#7d9bb9" stroke-width="0.9"/><path d="M0.5 9.3H6.5V7.8" stroke="#3c6792" stroke-width="1.1" fill="none"/><rect x="0.5" y="12" width="6" height="1.9" fill="#fdfeff" stroke="#7d9bb9" stroke-width="0.9"/><path d="M0.5 13.9H6.5V12.3" stroke="#3c6792" stroke-width="1.1" fill="none"/><rect x="0.5" y="13.9" width="6" height="2" fill="#fdfeff" stroke="#7d9bb9" stroke-width="0.9"/><path d="M0.5 15.9H6.5V14.200000000000001" stroke="#3c6792" stroke-width="1.1" fill="none"/><rect x="5.6" y="9.6" width="6" height="1.8" fill="#fdfeff" stroke="#b9c9da" stroke-width="0.9"/><path d="M5.6 11.4H11.6V9.9" stroke="#a9bdd2" stroke-width="1.1" fill="none"/><circle cx="12.4" cy="4.4" r="3.4" fill="#a30f1b"/><path d="M11.0 3.0000000000000004L13.8 5.800000000000001M13.8 3.0000000000000004L11.0 5.800000000000001" stroke="#fff" stroke-width="1.1"/></svg>
<svg style="left:377px;top:460px" width="15" height="17" viewBox="0 0 15 17"><path d="M7.5 1 L14.1 8 H11 V16.8 H4.1 V8 H0.9Z" fill="#9d9d9d"/></svg>
<svg style="left:402px;top:460px" width="15" height="18" viewBox="0 0 15 18"><defs><linearGradient id="g13" x1="0" y1="0" x2="1" y2="0"><stop offset="0" stop-color="#4f709b"/><stop offset="0.45" stop-color="#8aa4c3"/><stop offset="0.8" stop-color="#5d7da5"/><stop offset="0.9" stop-color="#152a48"/><stop offset="1" stop-color="#0d1f38"/></linearGradient><linearGradient id="g14" x1="0" y1="0" x2="1" y2="1"><stop offset="0" stop-color="#5f80ab"/><stop offset="0.45" stop-color="#7d99bb"/><stop offset="0.7" stop-color="#33507a"/><stop offset="1" stop-color="#0d1f38"/></linearGradient></defs><rect x="3.8" y="1" width="7.2" height="9.6" fill="url(#g13)"/><path d="M0.7 10 H14.1 L7.4 17Z" fill="url(#g14)"/></svg>
<svg style="left:426px;top:461px" width="18" height="15" viewBox="0 0 18 15"><path d="M0.9 7.5 L8 1 V4.2 H16.9 V10.8 H8 V14Z" fill="#9d9d9d"/></svg>
<svg style="left:451px;top:461px" width="18" height="15" viewBox="0 0 18 15"><path d="M17 7.5 L10 1 V4.2 H1 V10.8 H10 V14Z" fill="#9d9d9d"/></svg>
<svg style="left:477px;top:461px" width="16" height="15" viewBox="0 0 16 15"><rect x="0.5" y="0.5" width="15" height="14" fill="#fff" stroke="#5a9a3c"/><rect x="1" y="1" width="14" height="2.3" fill="#5a9a3c"/><rect x="1.6" y="1.5" width="12.8" height="0.7" fill="#b7dba6"/><path d="M5.5 3.3V14M10.5 3.3V14M1 6.8H15M1 10.6H15" stroke="#c3e0b4" stroke-width="1"/><path d="M15.2 1V14.6M1 14.4H15" stroke="#4e8c32" stroke-width="0.9"/></svg>
<svg style="left:1327px;top:463px" width="11" height="11" viewBox="0 0 11 11"><path d="M0.7 0.7 L5.5 5.3 L10.3 0.7 M0.7 5 L5.5 9.6 L10.3 5" stroke="#222" stroke-width="1.1" fill="none"/></svg>
<div style="left:1347px;top:464px;width:11px;height:9px;box-sizing:border-box;border:1px solid #000;border-top-width:2px"></div>
<div style="left:5px;top:485px;width:1361px;height:329px;background:#fff"></div>
<div style="left:7px;top:487px;width:1357px;height:25px;background:#f5f5f5"></div>
<span class="t" style="top:493px;left:11.00px;letter-spacing:-0.271px;">Show</span>
<div style="left:43px;top:490px;width:68px;height:19px;box-sizing:border-box;background:#fff;border:1px solid #e3e3ee;border-top-color:#ababab;border-left-color:#d0d0d8"></div>
<span class="t" style="top:493px;left:46.00px;letter-spacing:0.086px;">All</span>
<span class="t" style="top:493px;left:62.79px;letter-spacing:-0.231px;">levels</span>
<svg style="left:100px;top:497px" width="7" height="4" viewBox="0 0 7 4"><path d="M0 0H7L3.5 4Z" fill="#000"/></svg>
<div style="left:5px;top:512px;width:1359px;height:302px;background:#fff"></div>
<div style="left:7px;top:512px;width:1026px;height:35px;background:linear-gradient(to bottom,#fff 0,#fbfbfb 14px,#f0f0f0 24px,#e7e7e7 35px)"></div>
<div style="left:7px;top:547px;width:1026px;height:1px;background:#c9c9c9"></div>
<div style="left:28px;top:512px;width:1px;height:35px;background:linear-gradient(to bottom,rgba(210,210,210,0),#cfcfcf 60%)"></div>
<div style="left:199px;top:512px;width:1px;height:35px;background:linear-gradient(to bottom,rgba(210,210,210,0),#cfcfcf 60%)"></div>
<div style="left:282px;top:512px;width:1px;height:35px;background:linear-gradient(to bottom,rgba(210,210,210,0),#cfcfcf 60%)"></div>
<div style="left:366px;top:512px;width:1px;height:35px;background:linear-gradient(to bottom,rgba(210,210,210,0),#cfcfcf 60%)"></div>
<div style="left:450px;top:512px;width:1px;height:35px;background:linear-gradient(to bottom,rgba(210,210,210,0),#cfcfcf 60%)"></div>
<div style="left:534px;top:512px;width:1px;height:35px;background:linear-gradient(to bottom,rgba(210,210,210,0),#cfcfcf 60%)"></div>
<div style="left:573px;top:512px;width:1px;height:35px;background:linear-gradient(to bottom,rgba(210,210,210,0),#cfcfcf 60%)"></div>
<div style="left:645px;top:512px;width:1px;height:35px;background:linear-gradient(to bottom,rgba(210,210,210,0),#cfcfcf 60%)"></div>
<div style="left:717px;top:512px;width:1px;height:35px;background:linear-gradient(to bottom,rgba(210,210,210,0),#cfcfcf 60%)"></div>
<div style="left:822px;top:512px;width:1px;height:35px;background:linear-gradient(to bottom,rgba(210,210,210,0),#cfcfcf 60%)"></div>
<div style="left:927px;top:512px;width:1px;height:35px;background:linear-gradient(to bottom,rgba(210,210,210,0),#cfcfcf 60%)"></div>
<div style="left:1032px;top:512px;width:1px;height:35px;background:linear-gradient(to bottom,rgba(210,210,210,0),#cfcfcf 60%)"></div>
<span class="t" style="top:516px;left:31.00px;letter-spacing:0.037px;">Description</span>
<span class="t" style="top:516px;left:202.00px;letter-spacing:-0.253px;">Line</span>
<span class="t" style="top:516px;left:226.87px;letter-spacing:-0.137px;">Type</span>
<span class="t" style="top:516px;left:285.00px;letter-spacing:-0.187px;">Employee</span>
<span class="t" style="top:531px;left:285.00px;letter-spacing:-0.079px;">Category</span>
<span class="t" style="top:531px;left:336.26px;letter-spacing:0.127px;">No.</span>
<span class="t" style="top:516px;left:369.00px;letter-spacing:-0.187px;">Employee</span>
<span class="t" style="top:531px;left:369.00px;letter-spacing:0.127px;">No.</span>
<span class="t" style="top:516px;left:453.00px;letter-spacing:-0.288px;">Task</span>
<span class="t" style="top:516px;left:537.00px;letter-spacing:-0.281px;">Qua...</span>
<span class="t" style="top:516px;left:576.00px;letter-spacing:0.060px;">Billing</span>
<span class="t" style="top:531px;left:576.00px;letter-spacing:-0.329px;">Price,</span>
<span class="t" style="top:531px;left:607.90px;letter-spacing:-0.075px;">Curr.</span>
<span class="t" style="top:516px;left:648.00px;letter-spacing:-0.264px;">Cost,</span>
<span class="t" style="top:516px;left:677.89px;letter-spacing:-0.732px;">Base</span>
<span class="t" style="top:516px;left:720.00px;letter-spacing:0.226px;">Total</span>
<span class="t" style="top:516px;left:749.68px;letter-spacing:0.060px;">Billing</span>
<span class="t" style="top:531px;left:720.00px;letter-spacing:-0.329px;">Price,</span>
<span class="t" style="top:531px;left:751.90px;letter-spacing:-0.201px;">Currency</span>
<span class="t" style="top:516px;left:825.00px;letter-spacing:0.226px;">Total</span>
<span class="t" style="top:516px;left:854.68px;letter-spacing:-0.264px;">Cost,</span>
<span class="t" style="top:516px;left:884.57px;letter-spacing:-0.732px;">Base</span>
<span class="t" style="top:516px;left:930.00px;letter-spacing:-0.200px;">GM,</span>
<span class="t" style="top:516px;left:955.26px;letter-spacing:-0.732px;">Base</span>
<svg style="left:9px;top:527px" width="8" height="5" viewBox="0 0 8 5"><path d="M0.2 5 L3.9 0.3 L7.6 5Z" fill="#000"/></svg>
<svg style="left:18px;top:526px" width="10" height="7" viewBox="0 0 10 7"><path d="M1 0.5 L4 3.5 L1 6.5 M5.5 0.5 L8.5 3.5 L5.5 6.5" stroke="#000" stroke-width="1.2" fill="none"/></svg>
<div style="left:7px;top:548px;width:21px;height:19px;background:linear-gradient(to bottom,#f4f4f4,#e6e6e6)"></div>
<div style="left:7px;top:567px;width:21px;height:1px;background:#c9c9c9"></div>
<div style="left:7px;top:568px;width:21px;height:19px;background:linear-gradient(to bottom,#f4f4f4,#e6e6e6)"></div>
<div style="left:7px;top:587px;width:21px;height:1px;background:#c9c9c9"></div>
<div style="left:7px;top:588px;width:21px;height:19px;background:linear-gradient(to bottom,#f4f4f4,#e6e6e6)"></div>
<div style="left:7px;top:607px;width:21px;height:1px;background:#c9c9c9"></div>
<div style="left:7px;top:608px;width:21px;height:19px;background:linear-gradient(to bottom,#f4f4f4,#e6e6e6)"></div>
<div style="left:7px;top:627px;width:21px;height:1px;background:#c9c9c9"></div>
<div style="left:7px;top:628px;width:21px;height:19px;background:linear-gradient(to bottom,#f4f4f4,#e6e6e6)"></div>
<div style="left:7px;top:647px;width:21px;height:1px;background:#c9c9c9"></div>
<div style="left:7px;top:648px;width:21px;height:19px;background:linear-gradient(to bottom,#f4f4f4,#e6e6e6)"></div>
<div style="left:7px;top:667px;width:21px;height:1px;background:#c9c9c9"></div>
<div style="left:7px;top:668px;width:21px;height:19px;background:linear-gradient(to bottom,#f4f4f4,#e6e6e6)"></div>
<div style="left:7px;top:687px;width:21px;height:1px;background:#c9c9c9"></div>
<div style="left:7px;top:688px;width:21px;height:19px;background:linear-gradient(to bottom,#f4f4f4,#e6e6e6)"></div>
<div style="left:7px;top:707px;width:21px;height:1px;background:#c9c9c9"></div>
<div style="left:7px;top:708px;width:21px;height:19px;background:linear-gradient(to bottom,#f4f4f4,#e6e6e6)"></div>
<div style="left:7px;top:727px;width:21px;height:1px;background:#c9c9c9"></div>
<div style="left:7px;top:728px;width:21px;height:19px;background:linear-gradient(to bottom,#f4f4f4,#e6e6e6)"></div>
<div style="left:7px;top:747px;width:21px;height:1px;background:#c9c9c9"></div>
<div style="left:7px;top:748px;width:21px;height:19px;background:linear-gradient(to bottom,#f4f4f4,#e6e6e6)"></div>
<div style="left:7px;top:767px;width:21px;height:1px;background:#c9c9c9"></div>
<div style="left:7px;top:768px;width:21px;height:19px;background:linear-gradient(to bottom,#f4f4f4,#e6e6e6)"></div>
<div style="left:7px;top:787px;width:21px;height:1px;background:#c9c9c9"></div>
<div style="left:7px;top:788px;width:21px;height:19px;background:linear-gradient(to bottom,#f4f4f4,#e6e6e6)"></div>
<div style="left:7px;top:807px;width:21px;height:1px;background:#c9c9c9"></div>
<div style="left:7px;top:808px;width:21px;height:6px;background:linear-gradient(to bottom,#f4f4f4,#e6e6e6)"></div>
<div style="left:7px;top:827px;width:21px;height:1px;background:#c9c9c9"></div>
<div style="left:28px;top:548px;width:1px;height:266px;background:#c9c9c9"></div>
<div style="left:29px;top:548px;width:1004px;height:19px;background:#f4f4f4"></div>
<div style="left:718px;top:548px;width:104px;height:19px;background:#dcdcdc"></div>
<div style="left:928px;top:548px;width:104px;height:19px;background:#dcdcdc"></div>
<div style="left:29px;top:567px;width:1004px;height:1px;background:#cfcfcf"></div>
<div style="left:199px;top:548px;width:1px;height:20px;background:#d9d9d9"></div>
<div style="left:282px;top:548px;width:1px;height:20px;background:#d9d9d9"></div>
<div style="left:366px;top:548px;width:1px;height:20px;background:#d9d9d9"></div>
<div style="left:450px;top:548px;width:1px;height:20px;background:#d9d9d9"></div>
<div style="left:534px;top:548px;width:1px;height:20px;background:#d9d9d9"></div>
<div style="left:573px;top:548px;width:1px;height:20px;background:#d9d9d9"></div>
<div style="left:645px;top:548px;width:1px;height:20px;background:#d9d9d9"></div>
<div style="left:717px;top:548px;width:1px;height:20px;background:#d9d9d9"></div>
<div style="left:822px;top:548px;width:1px;height:20px;background:#d9d9d9"></div>
<div style="left:927px;top:548px;width:1px;height:20px;background:#d9d9d9"></div>
<div style="left:1032px;top:548px;width:1px;height:20px;background:#d9d9d9"></div>
<span class="t" style="top:551px;left:13.66px;letter-spacing:-0.673px;">1</span>
<span class="t" style="top:551px;left:44.00px;letter-spacing:-0.270px;">Analysis</span>
<span class="t" style="top:551px;left:203.30px;letter-spacing:-0.055px;">Time</span>
<span class="t" style="top:551px;left:285.40px;letter-spacing:-0.673px;">90</span>
<span class="t" style="top:551px;left:453.60px;letter-spacing:-0.673px;">100</span>
<span class="t" style="top:551px;left:542.39px;letter-spacing:-0.606px;">85,00</span>
<span class="t" style="top:551px;left:608.38px;letter-spacing:-0.617px;">150,00</span>
<span class="t" style="top:551px;left:686.39px;letter-spacing:-0.606px;">80,00</span>
<span class="t" style="top:551px;left:770.40px;letter-spacing:-0.598px;">12.750,00</span>
<span class="t" style="top:551px;left:881.41px;letter-spacing:-0.589px;">6.800,00</span>
<span class="t" style="top:551px;left:986.41px;letter-spacing:-0.589px;">5.950,00</span>
<div style="left:718px;top:568px;width:104px;height:19px;background:#e6e6e6"></div>
<div style="left:928px;top:568px;width:104px;height:19px;background:#e6e6e6"></div>
<div style="left:29px;top:587px;width:1004px;height:1px;background:#e4e4e4"></div>
<div style="left:199px;top:568px;width:1px;height:20px;background:#d9d9d9"></div>
<div style="left:282px;top:568px;width:1px;height:20px;background:#d9d9d9"></div>
<div style="left:366px;top:568px;width:1px;height:20px;background:#d9d9d9"></div>
<div style="left:450px;top:568px;width:1px;height:20px;background:#d9d9d9"></div>
<div style="left:534px;top:568px;width:1px;height:20px;background:#d9d9d9"></div>
<div style="left:573px;top:568px;width:1px;height:20px;background:#d9d9d9"></div>
<div style="left:645px;top:568px;width:1px;height:20px;background:#d9d9d9"></div>
<div style="left:717px;top:568px;width:1px;height:20px;background:#d9d9d9"></div>
<div style="left:822px;top:568px;width:1px;height:20px;background:#d9d9d9"></div>
<div style="left:927px;top:568px;width:1px;height:20px;background:#d9d9d9"></div>
<div style="left:1032px;top:568px;width:1px;height:20px;background:#d9d9d9"></div>
<span class="t" style="top:571px;left:13.66px;letter-spacing:-0.673px;">2</span>
<span class="t" style="top:571px;left:44.00px;letter-spacing:-0.072px;">Strategic</span>
<span class="t" style="top:571px;left:93.90px;letter-spacing:0.145px;">work</span>
<span class="t" style="top:571px;left:203.30px;letter-spacing:-0.055px;">Time</span>
<span class="t" style="top:571px;left:285.40px;letter-spacing:-0.673px;">90</span>
<span class="t" style="top:571px;left:453.60px;letter-spacing:-0.377px;">110</span>
<span class="t" style="top:571px;left:542.39px;letter-spacing:-0.606px;">40,00</span>
<span class="t" style="top:571px;left:608.38px;letter-spacing:-0.617px;">150,00</span>
<span class="t" style="top:571px;left:686.39px;letter-spacing:-0.606px;">80,00</span>
<span class="t" style="top:571px;left:776.41px;letter-spacing:-0.589px;">6.000,00</span>
<span class="t" style="top:571px;left:881.41px;letter-spacing:-0.589px;">3.200,00</span>
<span class="t" style="top:571px;left:986.41px;letter-spacing:-0.589px;">2.800,00</span>
<div style="left:718px;top:588px;width:104px;height:19px;background:#e6e6e6"></div>
<div style="left:928px;top:588px;width:104px;height:19px;background:#e6e6e6"></div>
<div style="left:29px;top:607px;width:1004px;height:1px;background:#e4e4e4"></div>
<div style="left:199px;top:588px;width:1px;height:20px;background:#d9d9d9"></div>
<div style="left:282px;top:588px;width:1px;height:20px;background:#d9d9d9"></div>
<div style="left:366px;top:588px;width:1px;height:20px;background:#d9d9d9"></div>
<div style="left:450px;top:588px;width:1px;height:20px;background:#d9d9d9"></div>
<div style="left:534px;top:588px;width:1px;height:20px;background:#d9d9d9"></div>
<div style="left:573px;top:588px;width:1px;height:20px;background:#d9d9d9"></div>
<div style="left:645px;top:588px;width:1px;height:20px;background:#d9d9d9"></div>
<div style="left:717px;top:588px;width:1px;height:20px;background:#d9d9d9"></div>
<div style="left:822px;top:588px;width:1px;height:20px;background:#d9d9d9"></div>
<div style="left:927px;top:588px;width:1px;height:20px;background:#d9d9d9"></div>
<div style="left:1032px;top:588px;width:1px;height:20px;background:#d9d9d9"></div>
<span class="t" style="top:591px;left:13.66px;letter-spacing:-0.673px;">3</span>
<span class="t" style="top:591px;left:44.00px;letter-spacing:-0.074px;">Project</span>
<span class="t" style="top:591px;left:84.03px;letter-spacing:0.071px;">Management</span>
<span class="t" style="top:591px;left:203.30px;letter-spacing:-0.055px;">Time</span>
<span class="t" style="top:591px;left:285.40px;letter-spacing:-0.673px;">40</span>
<span class="t" style="top:591px;left:453.60px;letter-spacing:-0.673px;">120</span>
<span class="t" style="top:591px;left:542.39px;letter-spacing:-0.606px;">55,00</span>
<span class="t" style="top:591px;left:608.38px;letter-spacing:-0.617px;">170,00</span>
<span class="t" style="top:591px;left:680.38px;letter-spacing:-0.617px;">100,00</span>
<span class="t" style="top:591px;left:776.41px;letter-spacing:-0.589px;">9.350,00</span>
<span class="t" style="top:591px;left:881.41px;letter-spacing:-0.589px;">5.500,00</span>
<span class="t" style="top:591px;left:986.41px;letter-spacing:-0.589px;">3.850,00</span>
<div style="left:718px;top:608px;width:104px;height:19px;background:#e6e6e6"></div>
<div style="left:928px;top:608px;width:104px;height:19px;background:#e6e6e6"></div>
<div style="left:29px;top:627px;width:1004px;height:1px;background:#e4e4e4"></div>
<div style="left:199px;top:608px;width:1px;height:20px;background:#d9d9d9"></div>
<div style="left:282px;top:608px;width:1px;height:20px;background:#d9d9d9"></div>
<div style="left:366px;top:608px;width:1px;height:20px;background:#d9d9d9"></div>
<div style="left:450px;top:608px;width:1px;height:20px;background:#d9d9d9"></div>
<div style="left:534px;top:608px;width:1px;height:20px;background:#d9d9d9"></div>
<div style="left:573px;top:608px;width:1px;height:20px;background:#d9d9d9"></div>
<div style="left:645px;top:608px;width:1px;height:20px;background:#d9d9d9"></div>
<div style="left:717px;top:608px;width:1px;height:20px;background:#d9d9d9"></div>
<div style="left:822px;top:608px;width:1px;height:20px;background:#d9d9d9"></div>
<div style="left:927px;top:608px;width:1px;height:20px;background:#d9d9d9"></div>
<div style="left:1032px;top:608px;width:1px;height:20px;background:#d9d9d9"></div>
<span class="t" style="top:611px;left:13.66px;letter-spacing:-0.673px;">4</span>
<span class="t" style="top:611px;left:44.00px;letter-spacing:0.347px;">Method</span>
<span class="t" style="top:611px;left:89.31px;letter-spacing:0.117px;">development</span>
<span class="t" style="top:611px;left:203.30px;letter-spacing:-0.055px;">Time</span>
<span class="t" style="top:611px;left:285.40px;letter-spacing:-0.673px;">90</span>
<span class="t" style="top:611px;left:453.60px;letter-spacing:-0.673px;">130</span>
<span class="t" style="top:611px;left:542.39px;letter-spacing:-0.606px;">45,00</span>
<span class="t" style="top:611px;left:608.38px;letter-spacing:-0.617px;">150,00</span>
<span class="t" style="top:611px;left:686.39px;letter-spacing:-0.606px;">80,00</span>
<span class="t" style="top:611px;left:776.41px;letter-spacing:-0.589px;">6.750,00</span>
<span class="t" style="top:611px;left:881.41px;letter-spacing:-0.589px;">3.600,00</span>
<span class="t" style="top:611px;left:986.41px;letter-spacing:-0.589px;">3.150,00</span>
<div style="left:718px;top:628px;width:104px;height:19px;background:#e6e6e6"></div>
<div style="left:928px;top:628px;width:104px;height:19px;background:#e6e6e6"></div>
<div style="left:29px;top:647px;width:1004px;height:1px;background:#e4e4e4"></div>
<div style="left:199px;top:628px;width:1px;height:20px;background:#d9d9d9"></div>
<div style="left:282px;top:628px;width:1px;height:20px;background:#d9d9d9"></div>
<div style="left:366px;top:628px;width:1px;height:20px;background:#d9d9d9"></div>
<div style="left:450px;top:628px;width:1px;height:20px;background:#d9d9d9"></div>
<div style="left:534px;top:628px;width:1px;height:20px;background:#d9d9d9"></div>
<div style="left:573px;top:628px;width:1px;height:20px;background:#d9d9d9"></div>
<div style="left:645px;top:628px;width:1px;height:20px;background:#d9d9d9"></div>
<div style="left:717px;top:628px;width:1px;height:20px;background:#d9d9d9"></div>
<div style="left:822px;top:628px;width:1px;height:20px;background:#d9d9d9"></div>
<div style="left:927px;top:628px;width:1px;height:20px;background:#d9d9d9"></div>
<div style="left:1032px;top:628px;width:1px;height:20px;background:#d9d9d9"></div>
<span class="t" style="top:631px;left:13.66px;letter-spacing:-0.673px;">5</span>
<span class="t" style="top:631px;left:44.00px;letter-spacing:0.068px;">Outsourcing</span>
<span class="t" style="top:631px;left:203.30px;letter-spacing:-0.055px;">Time</span>
<span class="t" style="top:631px;left:285.40px;letter-spacing:-0.673px;">60</span>
<span class="t" style="top:631px;left:453.60px;letter-spacing:-0.673px;">140</span>
<span class="t" style="top:631px;left:542.39px;letter-spacing:-0.606px;">45,00</span>
<span class="t" style="top:631px;left:608.38px;letter-spacing:-0.617px;">150,00</span>
<span class="t" style="top:631px;left:686.39px;letter-spacing:-0.606px;">80,00</span>
<span class="t" style="top:631px;left:776.41px;letter-spacing:-0.589px;">6.750,00</span>
<span class="t" style="top:631px;left:881.41px;letter-spacing:-0.589px;">3.600,00</span>
<span class="t" style="top:631px;left:986.41px;letter-spacing:-0.589px;">3.150,00</span>
<div style="left:718px;top:648px;width:104px;height:19px;background:#e6e6e6"></div>
<div style="left:928px;top:648px;width:104px;height:19px;background:#e6e6e6"></div>
<div style="left:29px;top:667px;width:1004px;height:1px;background:#e4e4e4"></div>
<div style="left:199px;top:648px;width:1px;height:20px;background:#d9d9d9"></div>
<div style="left:282px;top:648px;width:1px;height:20px;background:#d9d9d9"></div>
<div style="left:366px;top:648px;width:1px;height:20px;background:#d9d9d9"></div>
<div style="left:450px;top:648px;width:1px;height:20px;background:#d9d9d9"></div>
<div style="left:534px;top:648px;width:1px;height:20px;background:#d9d9d9"></div>
<div style="left:573px;top:648px;width:1px;height:20px;background:#d9d9d9"></div>
<div style="left:645px;top:648px;width:1px;height:20px;background:#d9d9d9"></div>
<div style="left:717px;top:648px;width:1px;height:20px;background:#d9d9d9"></div>
<div style="left:822px;top:648px;width:1px;height:20px;background:#d9d9d9"></div>
<div style="left:927px;top:648px;width:1px;height:20px;background:#d9d9d9"></div>
<div style="left:1032px;top:648px;width:1px;height:20px;background:#d9d9d9"></div>
<span class="t" style="top:651px;left:13.66px;letter-spacing:-0.673px;">6</span>
<span class="t" style="top:651px;left:44.00px;letter-spacing:-0.086px;">Customer</span>
<span class="t" style="top:651px;left:98.53px;letter-spacing:0.085px;">Meetings</span>
<span class="t" style="top:651px;left:203.30px;letter-spacing:-0.055px;">Time</span>
<span class="t" style="top:651px;left:285.40px;letter-spacing:-0.673px;">30</span>
<span class="t" style="top:651px;left:453.60px;letter-spacing:-0.673px;">150</span>
<span class="t" style="top:651px;left:542.39px;letter-spacing:-0.606px;">35,00</span>
<span class="t" style="top:651px;left:608.38px;letter-spacing:-0.617px;">190,00</span>
<span class="t" style="top:651px;left:680.38px;letter-spacing:-0.617px;">100,00</span>
<span class="t" style="top:651px;left:776.41px;letter-spacing:-0.589px;">6.650,00</span>
<span class="t" style="top:651px;left:881.41px;letter-spacing:-0.589px;">3.500,00</span>
<span class="t" style="top:651px;left:986.41px;letter-spacing:-0.589px;">3.150,00</span>
<div style="left:718px;top:668px;width:104px;height:19px;background:#e6e6e6"></div>
<div style="left:928px;top:668px;width:104px;height:19px;background:#e6e6e6"></div>
<div style="left:29px;top:687px;width:1004px;height:1px;background:#e4e4e4"></div>
<div style="left:199px;top:668px;width:1px;height:20px;background:#d9d9d9"></div>
<div style="left:282px;top:668px;width:1px;height:20px;background:#d9d9d9"></div>
<div style="left:366px;top:668px;width:1px;height:20px;background:#d9d9d9"></div>
<div style="left:450px;top:668px;width:1px;height:20px;background:#d9d9d9"></div>
<div style="left:534px;top:668px;width:1px;height:20px;background:#d9d9d9"></div>
<div style="left:573px;top:668px;width:1px;height:20px;background:#d9d9d9"></div>
<div style="left:645px;top:668px;width:1px;height:20px;background:#d9d9d9"></div>
<div style="left:717px;top:668px;width:1px;height:20px;background:#d9d9d9"></div>
<div style="left:822px;top:668px;width:1px;height:20px;background:#d9d9d9"></div>
<div style="left:927px;top:668px;width:1px;height:20px;background:#d9d9d9"></div>
<div style="left:1032px;top:668px;width:1px;height:20px;background:#d9d9d9"></div>
<span class="t" style="top:671px;left:13.66px;letter-spacing:-0.673px;">7</span>
<span class="t" style="top:671px;left:44.00px;letter-spacing:0.030px;">Consulting</span>
<span class="t" style="top:671px;left:104.19px;letter-spacing:-0.347px;">services</span>
<span class="t" style="top:671px;left:148.63px;letter-spacing:0.188px;">in</span>
<span class="t" style="top:671px;left:161.54px;letter-spacing:-0.176px;">gene...</span>
<span class="t" style="top:671px;left:203.30px;letter-spacing:-0.055px;">Time</span>
<span class="t" style="top:671px;left:285.40px;letter-spacing:-0.673px;">90</span>
<span class="t" style="top:671px;left:453.60px;letter-spacing:-0.673px;">160</span>
<span class="t" style="top:671px;left:536.38px;letter-spacing:-0.617px;">210,00</span>
<span class="t" style="top:671px;left:608.38px;letter-spacing:-0.617px;">150,00</span>
<span class="t" style="top:671px;left:686.39px;letter-spacing:-0.606px;">80,00</span>
<span class="t" style="top:671px;left:770.40px;letter-spacing:-0.598px;">31.500,00</span>
<span class="t" style="top:671px;left:875.40px;letter-spacing:-0.598px;">16.800,00</span>
<span class="t" style="top:671px;left:980.40px;letter-spacing:-0.598px;">14.700,00</span>
<div style="left:718px;top:688px;width:104px;height:19px;background:#e6e6e6"></div>
<div style="left:928px;top:688px;width:104px;height:19px;background:#e6e6e6"></div>
<div style="left:29px;top:707px;width:1004px;height:1px;background:#e4e4e4"></div>
<div style="left:199px;top:688px;width:1px;height:20px;background:#d9d9d9"></div>
<div style="left:282px;top:688px;width:1px;height:20px;background:#d9d9d9"></div>
<div style="left:366px;top:688px;width:1px;height:20px;background:#d9d9d9"></div>
<div style="left:450px;top:688px;width:1px;height:20px;background:#d9d9d9"></div>
<div style="left:534px;top:688px;width:1px;height:20px;background:#d9d9d9"></div>
<div style="left:573px;top:688px;width:1px;height:20px;background:#d9d9d9"></div>
<div style="left:645px;top:688px;width:1px;height:20px;background:#d9d9d9"></div>
<div style="left:717px;top:688px;width:1px;height:20px;background:#d9d9d9"></div>
<div style="left:822px;top:688px;width:1px;height:20px;background:#d9d9d9"></div>
<div style="left:927px;top:688px;width:1px;height:20px;background:#d9d9d9"></div>
<div style="left:1032px;top:688px;width:1px;height:20px;background:#d9d9d9"></div>
<span class="t" style="top:691px;left:13.66px;letter-spacing:-0.673px;">8</span>
<span class="t" style="top:691px;left:44.00px;letter-spacing:0.019px;">Subcontractor</span>
<span class="t" style="top:691px;left:203.30px;letter-spacing:-0.055px;">Time</span>
<span class="t" style="top:691px;left:285.40px;letter-spacing:-0.673px;">60</span>
<span class="t" style="top:691px;left:453.60px;letter-spacing:-0.673px;">170</span>
<span class="t" style="top:691px;left:536.53px;letter-spacing:-0.468px;">110,00</span>
<span class="t" style="top:691px;left:608.38px;letter-spacing:-0.617px;">150,00</span>
<span class="t" style="top:691px;left:686.39px;letter-spacing:-0.606px;">80,00</span>
<span class="t" style="top:691px;left:770.40px;letter-spacing:-0.598px;">16.500,00</span>
<span class="t" style="top:691px;left:881.41px;letter-spacing:-0.589px;">8.800,00</span>
<span class="t" style="top:691px;left:986.41px;letter-spacing:-0.589px;">7.700,00</span>
<div style="left:29px;top:727px;width:1004px;height:1px;background:#e4e4e4"></div>
<div style="left:199px;top:708px;width:1px;height:20px;background:#d9d9d9"></div>
<div style="left:282px;top:708px;width:1px;height:20px;background:#d9d9d9"></div>
<div style="left:366px;top:708px;width:1px;height:20px;background:#d9d9d9"></div>
<div style="left:450px;top:708px;width:1px;height:20px;background:#d9d9d9"></div>
<div style="left:534px;top:708px;width:1px;height:20px;background:#d9d9d9"></div>
<div style="left:573px;top:708px;width:1px;height:20px;background:#d9d9d9"></div>
<div style="left:645px;top:708px;width:1px;height:20px;background:#d9d9d9"></div>
<div style="left:717px;top:708px;width:1px;height:20px;background:#d9d9d9"></div>
<div style="left:822px;top:708px;width:1px;height:20px;background:#d9d9d9"></div>
<div style="left:927px;top:708px;width:1px;height:20px;background:#d9d9d9"></div>
<div style="left:1032px;top:708px;width:1px;height:20px;background:#d9d9d9"></div>
<div style="left:28px;top:547px;width:172px;height:21px;box-sizing:border-box;border:2px solid #a9a9a9;border-right-width:1px"></div>
<svg style="left:270px;top:555px" width="7" height="4" viewBox="0 0 7 4"><path d="M0 0H7L3.5 4Z" fill="#000"/></svg>
<svg style="left:354px;top:555px" width="7" height="4" viewBox="0 0 7 4"><path d="M0 0H7L3.5 4Z" fill="#000"/></svg>
<svg style="left:522px;top:555px" width="7" height="4" viewBox="0 0 7 4"><path d="M0 0H7L3.5 4Z" fill="#000"/></svg>
<svg style="left:436px;top:552px" width="11" height="11" viewBox="0 0 11 11"><circle cx="3.6" cy="3.6" r="3" fill="#f3f3f3" stroke="#b4b4b4" stroke-width="1.1"/><path d="M5.9 5.9 L9.6 9.4" stroke="#bcbcbc" stroke-width="1.9"/></svg>
<span class="t" style="top:12px;left:1200.00px;letter-spacing:-1.117px;color:#0a64a4;font-size:32px;font-weight:normal;-webkit-text-stroke:0.7px #0a64a4;">Deltek</span>
<span class="t" style="top:7.5px;left:1294.00px;letter-spacing:-0.036px;color:#2b7bb4;font-size:11.5px;">Know more.</span>
<span class="t" style="top:18.5px;left:1294.00px;letter-spacing:-0.162px;color:#2b7bb4;font-size:11.5px;">Do more.</span>
<span class="t" style="top:18px;left:1341.00px;color:#2b7bb4;font-size:5px;">™</span>
</div></body></html>
